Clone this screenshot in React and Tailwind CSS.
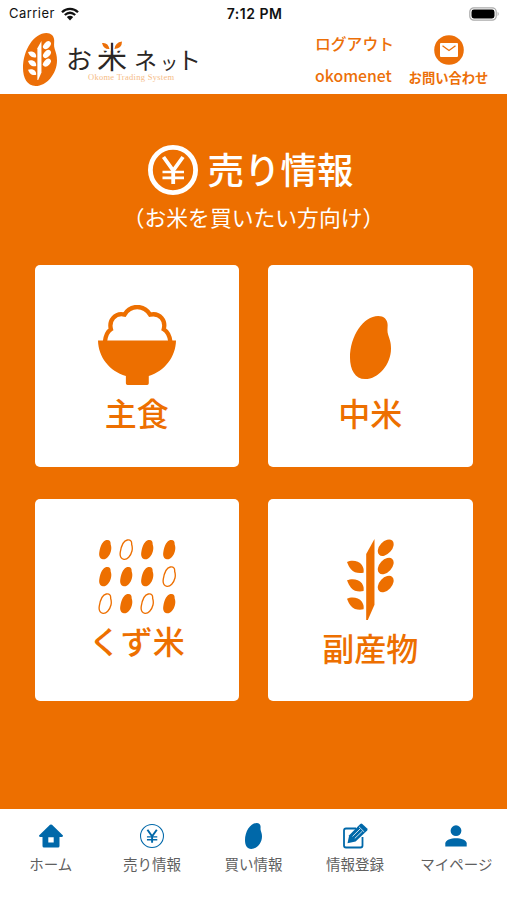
import React from "react";

const SEED =
  "M84 0C100 0 112 10 112 27C112 38 110 46 114 58C118 70 122 80 122 98C122 145 85 189 45 189C15 189 0 160 0 125C0 60 40 0 84 0Z";

function Seed({ className }) {
  return (
    <svg viewBox="0 0 122 189" className={className} preserveAspectRatio="none">
      <path d={SEED} fill="currentColor" />
    </svg>
  );
}

function Grain({ outline }) {
  return (
    <svg viewBox="-3 -2 43 64" className="h-[21.3px] w-[14.3px]">
      <path
        d="M22 1C32 -1 36 6 35 14C37 20 38 26 36 34C32 50 22 60 12 59C2 57 -1 48 1 37C4 18 12 3 22 1Z"
        fill={outline ? "none" : "currentColor"}
        stroke={outline ? "currentColor" : "none"}
        strokeWidth="4"
      />
    </svg>
  );
}

function Ear({ className }) {
  return (
    <svg viewBox="111 28 142 243" className={className} preserveAspectRatio="none">
      <g fill="currentColor">
        <path d="M169 73L194 28V225L174 271H169Z" />
        {[54, 109, 163].map((y) => (
          <ellipse key={y} cx="228" cy={y} rx="29" ry="18.5" transform={`rotate(-47 228 ${y})`} />
        ))}
        {[0, 55, 110].map((y) => (
          <path
            key={y}
            transform={`translate(0 ${y})`}
            d="M111 97C124 91 146 92 156 106C162 115 162 122 161 129C148 132 132 130 123 119C118 113 115 107 111 97Z"
          />
        ))}
      </g>
    </svg>
  );
}

function Bowl() {
  return (
    <svg viewBox="53 46 235 241" className="w-[78px] h-[80px]">
      <path
        d="M74 156C76 138 81 126 92 119C85 94 104 68 133 75C143 57 158 52 171 52C184 52 200 58 210 75C240 68 258 94 251 119C262 126 269 138 271 156"
        fill="none"
        stroke="currentColor"
        strokeWidth="13"
      />
      <path
        d="M53 153H288C287 203 254 245 206 260V282Q206 287 201 287H142Q137 287 137 282V260C87 245 54 203 53 153Z"
        fill="currentColor"
      />
    </svg>
  );
}

function Yen({ className, ring, stroke }) {
  return (
    <svg viewBox="0 0 50 50" className={className} fill="none" stroke="currentColor">
      <circle cx="25" cy="25" r={25 - ring / 2} strokeWidth={ring} />
      <path d="M15.5 12L25.2 25.5L35 12M25.2 25V39" strokeWidth={stroke} />
      <path d="M14.5 27H36M14.5 32.8H36" strokeWidth="2.7" />
    </svg>
  );
}

function StatusBar() {
  return (
    <div className="flex h-7 items-center justify-between pl-[9px] pr-[7px] font-['Inter',sans-serif] text-[#111]">
      <div className="flex w-[165px] items-center gap-[6px]">
        <span className="text-[13px] tracking-[0.45px]">Carrier</span>
        <svg viewBox="0 0 18 14" className="h-[14px] w-[18px]" fill="none" stroke="currentColor">
          <path d="M1 5.2C5.5 .8 12.5 .8 17 5.2M3.8 8C7 5.2 11 5.2 14.2 8" strokeWidth="2.3" />
          <path d="M5.8 9.9C7.8 8.2 10.2 8.2 12.2 9.9L9 13.5Z" fill="currentColor" stroke="none" />
        </svg>
      </div>
      <span className="-mt-px text-[14px] font-semibold leading-4 tracking-[0.5px]">7:12 PM</span>
      <div className="flex w-[165px] justify-end">
        <svg viewBox="0 0 31 14" className="h-[14px] w-[31px]">
          <rect x=".8" y=".8" width="26.4" height="12.4" rx="4" fill="#fff" stroke="#aaa" strokeWidth="1.2" />
          <rect x="2.5" y="2.5" width="23" height="9" rx="2.4" fill="#000" />
          <path d="M28.6 4.8Q30.8 7 28.6 9.2Z" fill="#aaa" />
        </svg>
      </div>
    </div>
  );
}

function Header() {
  return (
    <header className="flex h-[66px] justify-between pl-[23px] pr-[18px] text-[#ec6f08]">
      <div className="flex">
        <div className="relative mt-[5px] h-[53px] w-[34px]">
          <Seed className="h-[53px] w-[34px]" />
          <Ear className="absolute left-[5px] top-[8px] h-[39px] w-[23px] text-white" />
        </div>
        <div className="ml-[9px] mt-[7px] w-[134px]">
          <div className="flex h-[36px] items-end leading-none text-[#2b2725]">
            <span className="w-[31px] text-[26px]">お</span>
            <span className="relative mb-px w-[37px] text-[30px]">
              米
              <svg viewBox="0 0 24 12" className="absolute left-[3px] top-0 h-[12px] w-[24px]">
                <path d="M0 0H10.6V10.8H0ZM13.6 0H24V10.8H13.6Z" fill="#fff" />
                <path d="M2 3Q8 2 9.5 9Q3.5 9.5 2 3ZM14.5 9Q15 2.5 22 1.5Q22 8.5 14.5 9Z" fill="#ec6f08" />
              </svg>
            </span>
            <span className="w-[26px] text-[23px]">ネ</span>
            <span className="w-[17px] text-[18px]">ッ</span>
            <span className="w-[20px] text-[24px]">ト</span>
          </div>
          <p className="ml-[22px] mt-[2px] whitespace-nowrap font-['Liberation_Serif',serif] text-[8.5px] leading-[9px] tracking-[0.28px] text-[#f6bd87]">
            Okome Trading System
          </p>
        </div>
      </div>
      <div className="flex">
        <div className="mr-[14px] w-[79px] whitespace-nowrap font-medium">
          <p className="mt-[6px] text-[15.8px] leading-5">ログアウト</p>
          <p className="mt-[12px] text-[15.8px] leading-5">okomenet</p>
        </div>
        <div className="flex w-[81px] flex-col items-center">
          <svg viewBox="0 0 30 30" className="mt-[7px] h-[30px] w-[30px]">
            <circle cx="15" cy="15" r="14.8" fill="currentColor" />
            <rect x="6" y="8" width="18" height="14" rx="1" fill="#fff" />
            <path d="M8.5 10.8L15 15.5L21.5 10.8" fill="none" stroke="currentColor" strokeWidth="1.3" />
          </svg>
          <span className="mt-[5px] whitespace-nowrap text-[13.3px] font-bold leading-4">
            お問い合わせ
          </span>
        </div>
      </div>
    </header>
  );
}

// 1 = outlined grain, 0 = filled grain
const grains = [0, 1, 0, 0, 0, 0, 0, 1, 1, 0, 1, 0];

function Card({ label, icon, labelClass }) {
  return (
    <button className="flex h-[202px] flex-col items-center rounded-[5px] bg-white">
      <div className="flex flex-col items-center">{icon}</div>
      <span className={`whitespace-nowrap text-[32px] font-medium leading-9 ${labelClass}`}>{label}</span>
    </button>
  );
}

function Tab({ label, children }) {
  return (
    <a className="flex flex-1 flex-col items-center">
      <span className="mt-[14px] flex h-[26px] items-center text-[#0068a9]">{children}</span>
      <span className="mt-[5px] whitespace-nowrap text-[14.5px] leading-5 text-[#606060]">{label}</span>
    </a>
  );
}

export default function App() {
  return (
    <div className="flex h-[900px] w-[507px] flex-col overflow-hidden bg-white font-['Noto_Sans_CJK_JP',sans-serif]">
      <StatusBar />
      <Header />
      <main className="h-[715px] bg-[#ed6f00] text-white">
        <div className="flex items-start justify-center gap-[10px] pr-[6px] pt-[51px]">
          <Yen className="h-[50px] w-[50px]" ring={4.8} stroke={3.8} />
          <h1 className="-mt-px text-[36.5px] font-medium leading-[50px]">売り情報</h1>
        </div>
        <p className="mt-[8px] text-center text-[21.8px] leading-7">（お米を買いたい方向け）</p>
        <div className="mx-[34.5px] mt-[34px] grid grid-cols-2 gap-x-[29px] gap-y-[32px] text-[#ed6f00]">
          <Card label="主食" labelClass="mt-[9px]" icon={<div className="mt-[40px]"><Bowl /></div>} />
          <Card
            label="中米"
            labelClass="mt-[15px]"
            icon={<Seed className="mt-[51px] h-[63px] w-[41px]" />}
          />
          <Card
            label="くず米"
            labelClass="mt-[8px]"
            icon={
              <div className="mt-[40px] grid grid-cols-4 gap-x-[7px] gap-y-[5.6px]">
                {grains.map((g, i) => (
                  <Grain key={i} outline={g === 1} />
                ))}
              </div>
            }
          />
          <Card
            label="副産物"
            labelClass="mt-[9px]"
            icon={<Ear className="mt-[40px] h-[81px] w-[47px]" />}
          />
        </div>
      </main>
      <nav className="flex flex-1">
        <Tab label="ホーム">
          <svg viewBox="0 0 24 24" className="h-6 w-6" fill="currentColor">
            <path
              fillRule="evenodd"
              d="M11 .8Q12 0 13 .8L24 11.5Q24 13 22.5 13H20.5V22Q20.5 23.5 19 23.5H5Q3.5 23.5 3.5 22V13H1.5Q0 13 0 11.5ZM9.3 13.3V18.5H14.7V13.3Z"
            />
          </svg>
        </Tab>
        <Tab label="売り情報">
          <Yen className="h-6 w-6" ring={2.2} stroke={4} />
        </Tab>
        <Tab label="買い情報">
          <Seed className="h-[26px] w-[17px]" />
        </Tab>
        <Tab label="情報登録">
          <svg viewBox="0 0 26 26" className="h-[26px] w-[26px]" fill="none" stroke="currentColor">
            <path d="M14 5.5H4Q2 5.5 2 7.5V22.5Q2 24.5 4 24.5H18.5Q20.5 24.5 20.5 22.5V14" strokeWidth="1.8" />
            <path d="M5.5 20.3L7.2 12.3L18.3 1Q19.3 .2 20.3 1L25.2 5.6Q26 6.5 25.2 7.4L13.6 18.5Z" fill="currentColor" stroke="none" />
            <path d="M10.5 13.4L18 6M12.8 15.4L20.4 8.1M17 3.8L22.2 8.9" stroke="#fff" strokeWidth=".8" />
          </svg>
        </Tab>
        <Tab label="マイページ">
          <svg viewBox="0 0 22 22" className="h-[22px] w-[22px]" fill="currentColor">
            <circle cx="11" cy="5.7" r="5.4" />
            <path d="M.3 21.5V18.5C.3 15 6 13.2 11 13.2S21.7 15 21.7 18.5V21.5Z" />
          </svg>
        </Tab>
      </nav>
    </div>
  );
}
